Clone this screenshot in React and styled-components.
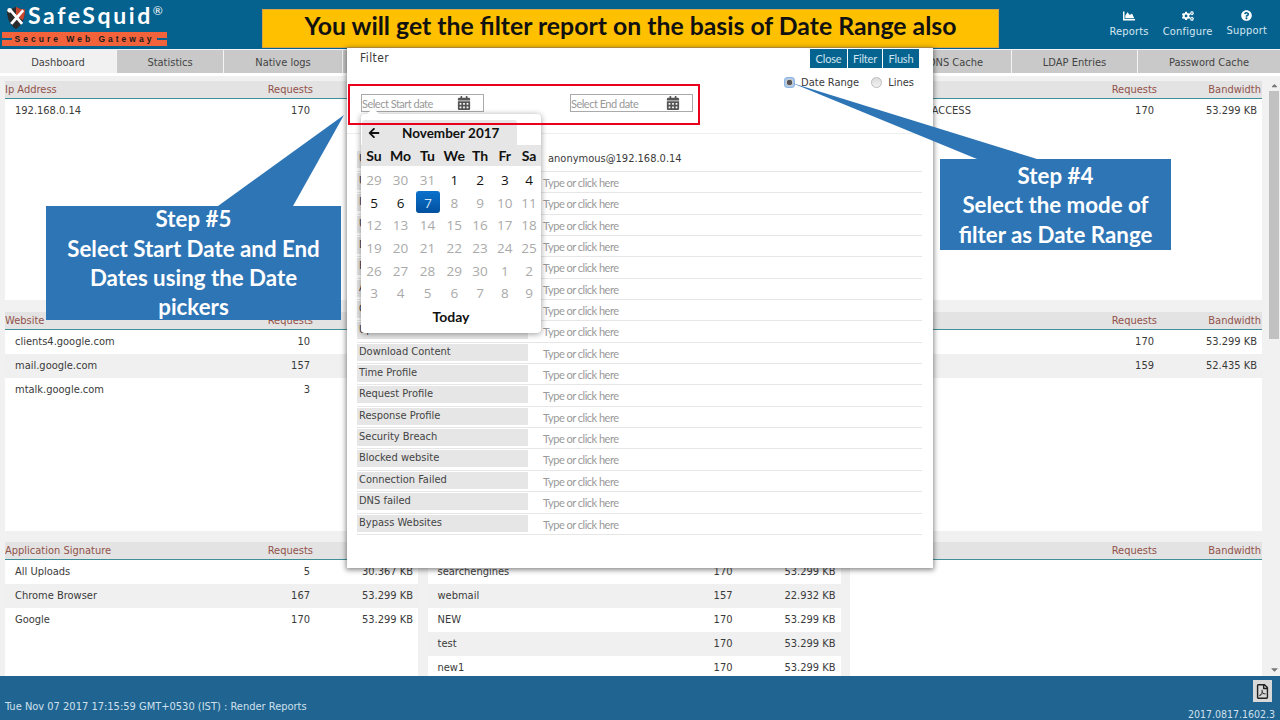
import React from 'react'
import styled, { createGlobalStyle } from 'styled-components'
import { FaChartArea, FaCogs, FaQuestionCircle, FaCalendarAlt, FaRegFilePdf, FaArrowLeft, FaCaretUp, FaCaretDown } from 'react-icons/fa'

const UI_FONT = '"DejaVu Sans Condensed", "DejaVu Sans", sans-serif'
const SOFT_FONT = 'Lato, "Open Sans", sans-serif'

const GlobalStyle = createGlobalStyle`
    html, body {
        margin: 0;
        padding: 0;
        background: #fff;
    }
    * {
        box-sizing: border-box;
    }
`

const tabs = [
    { label: 'Dashboard', width: '116px', active: true },
    { label: 'Statistics', width: '106px' },
    { label: 'Native logs', width: '118px' },
    { label: '', width: 'auto' },
    { label: 'DNS Cache', width: '111px' },
    { label: 'LDAP Entries', width: '125px' },
    { label: 'Password Cache', width: '142px' },
]

const panels = [
    { title: 'Ip Address', rows: [['192.168.0.14', '170', '53.299 KB']] },
    { title: 'Username', rows: [['anonymous', '170', '53.299 KB']] },
    { title: 'Profile', rows: [['DEFAULT WEB ACCESS', '170', '53.299 KB']] },
    {
        title: 'Website',
        rows: [
            ['clients4.google.com', '10', '4.112 KB'],
            ['mail.google.com', '157', '48.220 KB'],
            ['mtalk.google.com', '3', '0.967 KB'],
        ],
    },
    { title: 'Domain', rows: [['google.com', '170', '53.299 KB']] },
    {
        title: 'Content Type',
        rows: [
            ['text', '170', '53.299 KB'],
            ['image', '159', '52.435 KB'],
        ],
    },
    {
        title: 'Application Signature',
        rows: [
            ['All Uploads', '5', '30.367 KB'],
            ['Chrome Browser', '167', '53.299 KB'],
            ['Google', '170', '53.299 KB'],
        ],
    },
    {
        title: 'Categories',
        rows: [
            ['searchengines', '170', '53.299 KB'],
            ['webmail', '157', '22.932 KB'],
            ['NEW', '170', '53.299 KB'],
            ['test', '170', '53.299 KB'],
            ['new1', '170', '53.299 KB'],
        ],
    },
    { title: 'Security', rows: [] },
]

const filterFields = [
    'User Group', 'IP Address', 'User Agent', 'Domain', 'File Type', 'Application', 'Categories', 'Upload Content',
    'Download Content', 'Time Profile', 'Request Profile', 'Response Profile', 'Security Breach',
    'Blocked website', 'Connection Failed', 'DNS failed', 'Bypass Websites',
]

const weekDays = ['Su', 'Mo', 'Tu', 'We', 'Th', 'Fr', 'Sa']

const calendarDays = [
    [29, 0], [30, 0], [31, 0], [1, 1], [2, 1], [3, 1], [4, 1],
    [5, 1], [6, 1], [7, 2], [8, 0], [9, 0], [10, 0], [11, 0],
    [12, 0], [13, 0], [14, 0], [15, 0], [16, 0], [17, 0], [18, 0],
    [19, 0], [20, 0], [21, 0], [22, 0], [23, 0], [24, 0], [25, 0],
    [26, 0], [27, 0], [28, 0], [29, 0], [30, 0], [1, 0], [2, 0],
    [3, 0], [4, 0], [5, 0], [6, 0], [7, 0], [8, 0], [9, 0],
]

function ShieldLogo() {
    return (
        <svg width="20" height="24" viewBox="0 0 22 25">
            <path d="M1 3 C5 3 8 2 11 0 C14 2 17 3 21 3 C21 13 18 20 11 25 C4 20 1 13 1 3 Z" fill="#2b2b2b" />
            <path d="M11 0 C14 2 17 3 21 3 C21 8 20 12 18.5 15 L11 10 Z" fill="#c8452f" />
            <path d="M3 4 L6 3 L19 18 L16.500 20 Z" fill="#fff" />
            <path d="M18 3 L20 5 L7 20 L4.500 18 Z" fill="#fff" />
            <circle cx="4" cy="4" r="2.600" fill="#fff" />
        </svg>
    )
}

export default function App() {
    return (
        <Page>
            <GlobalStyle />
            <Header>
                <Logo>
                    <LogoTop>
                        <ShieldLogo />
                        <LogoName>SafeSquid<sup>®</sup></LogoName>
                    </LogoTop>
                    <LogoBand>Secure Web Gateway</LogoBand>
                </Logo>
                <Banner>You will get the filter report on the basis of Date Range also</Banner>
                <HeaderNav>
                    <NavItem><FaChartArea size={12} />Reports</NavItem>
                    <NavItem><FaCogs size={12} />Configure</NavItem>
                    <NavItem><FaQuestionCircle size={11} />Support</NavItem>
                </HeaderNav>
            </Header>

            <TabBar>
                {tabs.map((tab, i) => (
                    <Tab key={i} $width={tab.width} $active={tab.active}>{tab.label}</Tab>
                ))}
            </TabBar>

            <Body>
                <Dashboard>
                    {panels.map((panel) => (
                        <Panel key={panel.title}>
                            <PanelHead>
                                <HeadName>{panel.title}</HeadName>
                                <HeadRequests>Requests</HeadRequests>
                                <HeadBandwidth>Bandwidth</HeadBandwidth>
                            </PanelHead>
                            {panel.rows.map((row) => (
                                <Row key={row[0]}>
                                    <span>{row[0]}</span>
                                    <Num>{row[1]}</Num>
                                    <Num>{row[2]}</Num>
                                </Row>
                            ))}
                        </Panel>
                    ))}
                </Dashboard>
                <Scrollbar>
                    <FaCaretUp size={9} />
                    <Thumb />
                    <FaCaretDown size={11} />
                </Scrollbar>
            </Body>

            <Footer>
                <Status>Tue Nov 07 2017 17:15:59 GMT+0530 (IST) : Render Reports</Status>
                <FooterRight>
                    <PdfButton><FaRegFilePdf size={15} /></PdfButton>
                    <Version>2017.0817.1602.3</Version>
                </FooterRight>
            </Footer>

            <Modal>
                <ModalTop>
                    <ModalLeft>
                        <ModalTitle>Filter</ModalTitle>
                        <DateRow>
                            <DateInput>Select Start date<FaCalendarAlt size={14} /></DateInput>
                            <DateInput>Select End date<FaCalendarAlt size={14} /></DateInput>
                        </DateRow>
                    </ModalLeft>
                    <ModalRight>
                        <ButtonGroup>
                            <ToolButton $width={37}>Close</ToolButton>
                            <ToolButton $width={34}>Filter</ToolButton>
                            <ToolButton $width={36}>Flush</ToolButton>
                        </ButtonGroup>
                        <RadioRow>
                            <Radio $checked />
                            <RadioLabel>Date Range</RadioLabel>
                            <Radio />
                            <RadioLabel>Lines</RadioLabel>
                        </RadioRow>
                    </ModalRight>
                </ModalTop>

                <FilterForm>
                    <FirstRow>
                        <FieldLabel>User</FieldLabel>
                        <FieldValue>anonymous@192.168.0.14</FieldValue>
                    </FirstRow>
                    {filterFields.map((name) => (
                        <FilterRow key={name}>
                            <FieldLabel>{name}</FieldLabel>
                            <FieldHint>Type or click here</FieldHint>
                        </FilterRow>
                    ))}
                </FilterForm>

                <Calendar>
                    <CalendarHead>
                        <FaArrowLeft size={12} />
                        <MonthName>November 2017</MonthName>
                    </CalendarHead>
                    <WeekRow>
                        {weekDays.map((d) => <WeekDay key={d}>{d}</WeekDay>)}
                    </WeekRow>
                    <DayGrid>
                        {calendarDays.map(([day, kind], i) => (
                            <Day key={i} $kind={kind}>{day}</Day>
                        ))}
                    </DayGrid>
                    <Today>Today</Today>
                </Calendar>

                <RedBox />
            </Modal>

            <Pointer $left={218} $top={115} width="127" height="92" viewBox="0 0 127 92">
                <polygon points="126,0 0,91 75,91" fill="#2e75b6" />
            </Pointer>
            <Pointer $left={792} $top={83} width="246" height="77" viewBox="0 0 246 77">
                <polygon points="0,0 185,76 245,76" fill="#2e75b6" />
            </Pointer>

            <StepFive>
                <div>
                    Step #5<br />
                    Select Start Date and End<br />
                    Dates using the Date<br />
                    pickers
                </div>
            </StepFive>
            <StepFour>
                Step #4<br />
                Select the mode of<br />
                filter as Date Range
            </StepFour>
        </Page>
    )
}

const Page = styled.div`
    position: relative;
    width: 1280px;
    height: 720px;
    overflow: hidden;
    display: flex;
    flex-direction: column;
    font-family: ${UI_FONT};
    font-size: 11px;
    color: #3a3a3a;
`

const Header = styled.header`
    height: 49px;
    flex: none;
    display: flex;
    background: #05628f;
    padding: 0 13px 0 2px;
`

const Logo = styled.div`
    width: 165px;
    flex: none;
    display: flex;
    flex-direction: column;
`

const LogoTop = styled.div`
    height: 32px;
    display: flex;
    align-items: flex-start;
    padding: 6px 0 0 4px;
`

const LogoName = styled.div`
    margin: -5px 0 0 2px;
    font-family: ${SOFT_FONT};
    font-weight: 700;
    font-size: 23px;
    line-height: 28px;
    letter-spacing: 2.600px;
    color: #fff;

    sup {
        font-size: 12px;
        line-height: 0;
        font-weight: 400;
        letter-spacing: 0;
    }
`

const LogoBand = styled.div`
    position: relative;
    height: 14px;
    background: #f2633c;
    text-align: center;
    font-family: "Liberation Sans", sans-serif;
    font-weight: 700;
    font-size: 8.500px;
    line-height: 14px;
    letter-spacing: 3px;
    color: #1c1c1c;

    &::before, &::after {
        content: '';
        position: absolute;
        top: 6px;
        height: 2px;
        background: #05628f;
    }
    &::before {
        left: 0;
        width: 10px;
    }
    &::after {
        right: 0;
        width: 10px;
    }
`

const Banner = styled.div`
    width: 737px;
    height: 39px;
    flex: none;
    margin: 9px 0 0 95px;
    background: #ffc000;
    border: 1px solid #d9a441;
    text-align: center;
    font-family: ${SOFT_FONT};
    font-weight: 700;
    font-size: 24.800px;
    line-height: 31px;
    color: #111;
`

const HeaderNav = styled.nav`
    margin-left: auto;
    display: flex;
    gap: 14px;
    padding-top: 10px;
`

const NavItem = styled.a`
    display: flex;
    flex-direction: column;
    align-items: center;
    gap: 3px;
    font-size: 11px;
    line-height: 14px;
    letter-spacing: 0.2px;
    color: #d5e6ef;

    svg {
        color: #fff;
    }
`

const TabBar = styled.div`
    height: 24px;
    flex: none;
    display: flex;
    gap: 1px;
    padding-top: 1px;
    background: #f4f4f4;
`

const Tab = styled.div`
    flex: ${(p) => (p.$width === 'auto' ? '1' : `none`)};
    width: ${(p) => p.$width};
    background: ${(p) => (p.$active ? '#f1f1f1' : '#c9c9c9')};
    text-align: center;
    line-height: 25px;
    color: #444;
`

const Body = styled.main`
    flex: 1;
    min-height: 0;
    display: flex;
`

const Dashboard = styled.div`
    flex: 1;
    overflow: hidden;
    display: grid;
    grid-template-columns: 413px 413px 412px;
    grid-auto-rows: 219px;
    gap: 11.500px 9.500px;
    padding: 5px 0 0 5px;
    border-top: 3px solid #fff;
    background: #f1f1f1;
`

const Panel = styled.section`
    background: #fff;
    overflow: hidden;
`

const PanelHead = styled.div`
    height: 18px;
    display: grid;
    grid-template-columns: 1fr 70px 104px;
    padding-right: 1px;
    border-bottom: 1px solid #3f8f98;
    background: #e3e3e3;
    line-height: 17px;
    color: #92524a;
`

const HeadName = styled.span``

const HeadRequests = styled.span`
    text-align: right;
`

const HeadBandwidth = styled.span`
    text-align: right;
`

const Row = styled.div`
    height: 24px;
    display: grid;
    grid-template-columns: 1fr 70px 103px;
    padding: 0 5px 0 10px;
    line-height: 23px;

    &:nth-of-type(odd) {
        background: #f0f0f0;
    }
`

const Num = styled.span`
    text-align: right;
`

const Scrollbar = styled.div`
    width: 15px;
    flex: none;
    display: flex;
    flex-direction: column;
    align-items: center;
    padding: 5px 0 1px 3px;
    margin-top: 3px;
    background: #f1f1f1;
    color: #777;
`

const Thumb = styled.div`
    width: 10px;
    height: 248px;
    margin-top: 1px;
    margin-bottom: auto;
    background: #c1c1c1;
`

const Footer = styled.footer`
    height: 44px;
    flex: none;
    display: flex;
    justify-content: space-between;
    align-items: flex-end;
    padding: 0 5px 0 5px;
    background: #206491;
    color: #cfe0ec;
`

const Status = styled.div`
    margin-bottom: 6px;
    line-height: 14px;
`

const FooterRight = styled.div`
    display: flex;
    flex-direction: column;
    align-items: flex-end;
`

const PdfButton = styled.div`
    width: 19px;
    height: 22px;
    margin: 0 3px 6px 0;
    display: flex;
    align-items: center;
    justify-content: center;
    background: #d9d9d9;
    color: #222;
`

const Version = styled.div`
    font-size: 10.500px;
    line-height: 12px;
`

const Modal = styled.div`
    position: absolute;
    left: 347px;
    top: 48px;
    width: 586px;
    height: 520px;
    background: #fff;
    box-shadow: 0 1px 5px 1px rgba(40, 40, 40, 0.55);
`

const ModalTop = styled.div`
    height: 86px;
    display: flex;
    justify-content: space-between;
    border-bottom: 1px solid #eee;
`

const ModalLeft = styled.div`
    padding: 2px 0 0 13px;
`

const ModalTitle = styled.div`
    font-size: 12px;
    line-height: 17px;
    letter-spacing: 0.4px;
`

const DateRow = styled.div`
    display: flex;
    gap: 86px;
    margin: 27px 0 0 1px;
`

const DateInput = styled.div`
    width: 123px;
    height: 18px;
    display: flex;
    align-items: center;
    justify-content: space-between;
    padding: 0 12px 0 0;
    border: 1px solid #aaa;
    font-family: ${SOFT_FONT};
    font-size: 11px;
    letter-spacing: -0.5px;
    color: #999;

    svg {
        color: #555;
    }
`

const ModalRight = styled.div`
    display: flex;
    flex-direction: column;
    align-items: flex-end;
    padding: 1px 14px 0 0;
`

const ButtonGroup = styled.div`
    display: flex;
    gap: 1px;
`

const ToolButton = styled.button`
    width: ${(p) => p.$width}px;
    height: 19px;
    padding: 0;
    border: 0;
    background: #05638f;
    font-family: ${SOFT_FONT};
    font-size: 11px;
    letter-spacing: -0.2px;
    color: #cfe4ef;
`

const RadioRow = styled.div`
    display: flex;
    align-items: center;
    margin: 8px 5px 0 0;
`

const Radio = styled.span`
    width: 11px;
    height: 11px;
    border-radius: ${(p) => (p.$checked ? '3px' : '50%')};
    border: 1px solid ${(p) => (p.$checked ? '#8fb6e2' : '#bbb')};
    background: ${(p) => (p.$checked ? 'radial-gradient(circle, #555 0 2.5px, #c9c9c9 3px 3.5px, #a8c8ee 4px)' : 'linear-gradient(#ddd, #f2f2f2)')};
    margin-right: 6px;
`

const RadioLabel = styled.span`
    margin-right: 12px;

    &:last-child {
        margin-right: 0;
    }
`

const FilterForm = styled.div`
    margin: 13px 11px 0 10px;
`

const FilterRow = styled.div`
    height: 21.350px;
    display: grid;
    grid-template-columns: 171px 1fr;
    padding: 1px 0 0 0;
    border-bottom: 1px solid #e6e6e6;
`

const FirstRow = styled(FilterRow)`
    height: 25px;
    padding-top: 4px;
`

const FieldLabel = styled.div`
    height: 17px;
    padding-left: 2px;
    background: #e6e6e6;
    line-height: 16px;
    color: #444;
`

const FieldValue = styled.div`
    margin-left: 20px;
    line-height: 15px;
`

const FieldHint = styled.div`
    margin: 2px 0 0 15px;
    font-family: ${SOFT_FONT};
    font-size: 11px;
    letter-spacing: -0.5px;
    line-height: 15px;
    color: #999;
`

const Calendar = styled.div`
    position: absolute;
    left: 14px;
    top: 66px;
    width: 180px;
    height: 219px;
    padding-top: 6px;
    border-radius: 4px;
    background: #fff;
    box-shadow: 0 1px 6px rgba(0, 0, 0, 0.4);
    font-family: "Open Sans", sans-serif;
    color: #111;

    &::before {
        content: '';
        position: absolute;
        left: 6px;
        top: -6px;
        border-left: 6px solid transparent;
        border-right: 6px solid transparent;
        border-bottom: 6px solid #fff;
    }
`

const CalendarHead = styled.div`
    width: 155px;
    height: 25px;
    margin-left: 1px;
    display: flex;
    align-items: center;
    padding-left: 6px;
    background: #e6e6e6;
    border-radius: 3px 3px 0 0;
`

const MonthName = styled.div`
    margin-left: 22px;
    font-family: ${SOFT_FONT};
    font-weight: 700;
    font-size: 13.500px;
`

const calendarColumns = '26px 27px 27px 26.500px 25px 24.500px 24px'

const WeekRow = styled.div`
    height: 21px;
    display: grid;
    grid-template-columns: ${calendarColumns};
    background: #e6e6e6;
`

const WeekDay = styled.div`
    text-align: center;
    font-family: ${SOFT_FONT};
    font-weight: 700;
    font-size: 14px;
    line-height: 22px;
`

const DayGrid = styled.div`
    display: grid;
    grid-template-columns: ${calendarColumns};
    grid-auto-rows: 22.700px;
    padding-top: 2px;
`

const Day = styled.div`
    margin: ${(p) => (p.$kind === 2 ? '0 1px 0 2px' : '0')};
    text-align: center;
    font-size: 13.500px;
    line-height: 25px;
    border-radius: 3px;
    color: ${(p) => (p.$kind === 0 ? '#aaa' : p.$kind === 2 ? '#d5e6f7' : '#111')};
    background: ${(p) => (p.$kind === 2 ? 'linear-gradient(#0a72cc, #03509f)' : 'none')};
`

const Today = styled.div`
    margin-top: 2px;
    text-align: center;
    font-family: ${SOFT_FONT};
    font-weight: 700;
    font-size: 14px;
    line-height: 22px;
`

const RedBox = styled.div`
    position: absolute;
    left: 1px;
    top: 36px;
    width: 352px;
    height: 41px;
    border: 2px solid #e8001c;
`

const Pointer = styled.svg`
    position: absolute;
    left: ${(p) => p.$left}px;
    top: ${(p) => p.$top}px;
`

const Callout = styled.div`
    position: absolute;
    background: #2e75b6;
    text-align: center;
    font-family: ${SOFT_FONT};
    font-weight: 700;
    font-size: 22.300px;
    line-height: 29.400px;
    color: #fff;
`

const StepFive = styled(Callout)`
    left: 46px;
    top: 206px;
    width: 295px;
    height: 114px;
    display: flex;
    align-items: center;
    justify-content: center;
`

const StepFour = styled(Callout)`
    left: 940px;
    top: 159px;
    width: 231px;
    height: 91px;
    padding-top: 2px;
`
